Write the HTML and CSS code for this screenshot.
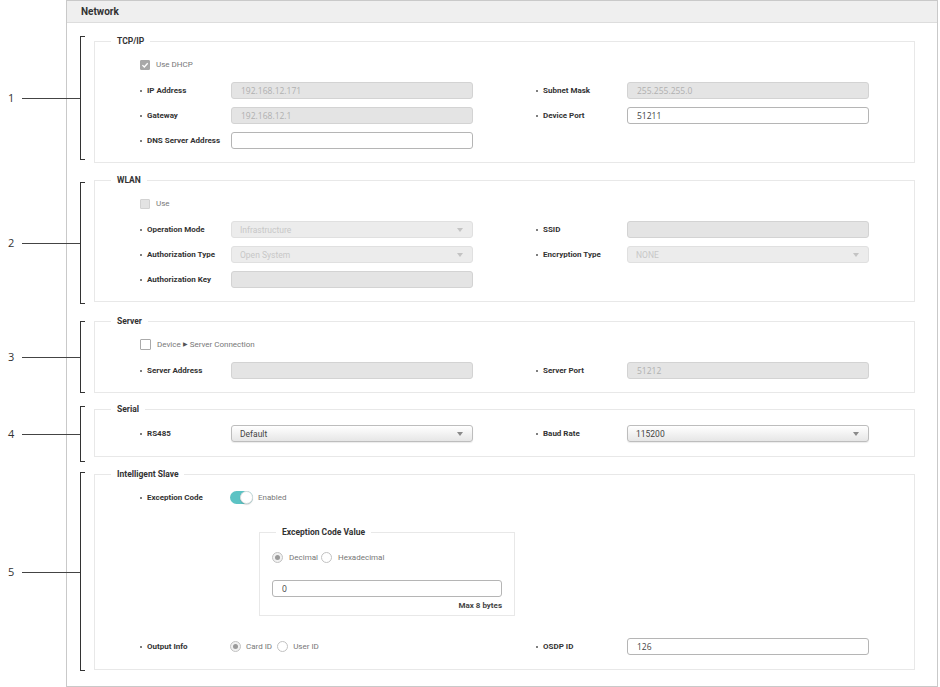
FILE: index.html
```html
<!DOCTYPE html>
<html lang="en">
<head>
<meta charset="utf-8">
<title>Network</title>
<link rel="stylesheet" href="styles.css">
</head>
<body>
<div class="page">
  <div class="callout callout-1"><span class="callout-num">1</span><span class="callout-line"></span><span class="callout-bracket"></span></div>
  <div class="callout callout-2"><span class="callout-num">2</span><span class="callout-line"></span><span class="callout-bracket"></span></div>
  <div class="callout callout-3"><span class="callout-num">3</span><span class="callout-line"></span><span class="callout-bracket"></span></div>
  <div class="callout callout-4"><span class="callout-num">4</span><span class="callout-line"></span><span class="callout-bracket"></span></div>
  <div class="callout callout-5"><span class="callout-num">5</span><span class="callout-line"></span><span class="callout-bracket"></span></div>

  <div class="panel">
    <div class="panel-head">Network</div>
    <div class="panel-body">

      <section class="group">
        <h3 class="group-title">TCP/IP</h3>
        <div class="group-body">
          <label class="check"><span class="box checked"><svg width="10" height="10" viewBox="0 0 10 10"><path d="M2.4 5.1 L4.3 7 L7.7 3.2" fill="none" stroke="#fff" stroke-width="1.3"/></svg></span><span>Use DHCP</span></label>
          <div class="form-grid">
            <span class="label">IP Address</span>
            <input class="field" type="text" value="192.168.12.171" disabled>
            <span class="label right">Subnet Mask</span>
            <input class="field" type="text" value="255.255.255.0" disabled>
            <span class="label">Gateway</span>
            <input class="field" type="text" value="192.168.12.1" disabled>
            <span class="label right">Device Port</span>
            <input class="field" type="text" value="51211">
            <span class="label">DNS Server Address</span>
            <input class="field" type="text" value="">
          </div>
        </div>
      </section>

      <section class="group">
        <h3 class="group-title">WLAN</h3>
        <div class="group-body">
          <label class="check"><span class="box disabled"></span><span>Use</span></label>
          <div class="form-grid">
            <span class="label">Operation Mode</span>
            <div class="select is-disabled"><select disabled><option>Infrastructure</option></select></div>
            <span class="label right">SSID</span>
            <input class="field" type="text" value="" disabled>
            <span class="label">Authorization Type</span>
            <div class="select is-disabled"><select disabled><option>Open System</option></select></div>
            <span class="label right">Encryption Type</span>
            <div class="select is-disabled"><select disabled><option>NONE</option></select></div>
            <span class="label">Authorization Key</span>
            <input class="field" type="text" value="" disabled>
          </div>
        </div>
      </section>

      <section class="group group-server">
        <h3 class="group-title">Server</h3>
        <div class="group-body">
          <label class="check"><span class="box plain"></span><span>Device <span class="tri">▶</span> Server Connection</span></label>
          <div class="form-grid">
            <span class="label">Server Address</span>
            <input class="field" type="text" value="" disabled>
            <span class="label right">Server Port</span>
            <input class="field" type="text" value="51212" disabled>
          </div>
        </div>
      </section>

      <section class="group group-serial">
        <h3 class="group-title">Serial</h3>
        <div class="group-body serial-body">
          <div class="form-grid">
            <span class="label">RS485</span>
            <div class="select"><select><option>Default</option></select></div>
            <span class="label right">Baud Rate</span>
            <div class="select"><select><option>115200</option></select></div>
          </div>
        </div>
      </section>

      <section class="group">
        <h3 class="group-title">Intelligent Slave</h3>
        <div class="group-body slave-body">
          <div class="form-grid">
            <span class="label">Exception Code</span>
            <div class="toggle-wrap"><span class="toggle"></span><span>Enabled</span></div>
          </div>

          <div class="subgroup">
            <h4 class="group-title">Exception Code Value</h4>
            <div class="subgroup-body">
              <div class="radios">
                <span class="radio-opt"><span class="radio on"></span>Decimal</span>
                <span class="radio-opt"><span class="radio"></span>Hexadecimal</span>
              </div>
              <input class="field sub-field" type="text" value="0">
              <div class="note">Max 8 bytes</div>
            </div>
          </div>

          <div class="form-grid output-grid">
            <span class="label">Output Info</span>
            <div class="radios wide">
              <span class="radio-opt"><span class="radio on"></span>Card ID</span>
              <span class="radio-opt"><span class="radio"></span>User ID</span>
            </div>
            <span class="label right">OSDP ID</span>
            <input class="field" type="text" value="126">
          </div>
        </div>
      </section>

    </div>
  </div>
</div>
</body>
</html>
```

FILE: styles.css
```css
body {
  margin: 0;
  background: #fff;
  color: #333;
  font-family: Roboto, "Liberation Sans", sans-serif;
}

.page {
  position: relative;
  width: 940px;
  height: 687px;
  overflow: hidden;
}

/* ---------- callouts (annotation overlay) ---------- */
.callout {
  position: absolute;
  left: 0;
  width: 86px;
}
.callout-1 { top: 36px; height: 124px; }
.callout-2 { top: 182px; height: 122px; }
.callout-3 { top: 321px; height: 72px; }
.callout-4 { top: 406px; height: 56px; }
.callout-5 { top: 472px; height: 199px; }

.callout-num {
  position: absolute;
  left: 8px;
  top: 50%;
  transform: translateY(-50%);
  font-family: "Open Sans", "Liberation Sans", sans-serif;
  font-size: 11px;
  line-height: 12px;
  color: #333;
}
.callout-line {
  position: absolute;
  left: 22px;
  width: 58px;
  top: 50%;
  height: 1px;
  background: #444;
}
.callout-bracket {
  position: absolute;
  left: 80px;
  top: 0;
  bottom: 0;
  width: 4px;
  border: 1px solid #333;
  border-right: none;
}

/* ---------- panel ---------- */
.panel {
  margin-left: 66px;
  width: 872px;
  box-sizing: border-box;
  border: 1px solid #c9c9c9;
}
.panel-head {
  height: 21px;
  line-height: 22px;
  padding-left: 14px;
  background: #efefef;
  border-bottom: 1px solid #dddddd;
  font-size: 10px;
  font-weight: 700;
  color: #333;
}
.panel-body {
  padding: 18px 22px 16px 27px;
}

/* ---------- groups ---------- */
.group {
  border: 1px solid #e8e8e8;
  margin-top: 17px;
}
.group:first-child { margin-top: 0; }
.group-server { margin-top: 19px; }
.group-serial { margin-top: 16px; }

.group-title {
  width: fit-content;
  margin: -7px 0 0 16px;
  padding: 0 6px;
  background: #fff;
  font-size: 8.5px;
  line-height: 12px;
  font-weight: 700;
  color: #333;
}
.group-body {
  padding: 9px 44px 13px 45px;
}
.serial-body { padding-top: 10px; padding-bottom: 14px; }
.slave-body { padding-bottom: 14px; }

.check {
  display: flex;
  align-items: center;
  gap: 6px;
  height: 17px;
  margin-bottom: 9px;
  font-size: 8px;
  color: #777;
}
.tri { font-size: 6px; color: #555; vertical-align: 1px; }

.box {
  width: 10px;
  height: 10px;
  box-sizing: border-box;
  border: 1px solid #c8c8c8;
  border-radius: 1px;
  background: #fff;
}
.box svg { display: block; margin: -1px; }
.box.checked { background: #a8a8a8; border-color: #a8a8a8; }
.box.disabled { background: #e3e3e3; border-color: #d2d2d2; }
.box.plain { width: 11px; height: 11px; border-color: #aaaaaa; }

/* ---------- form grid ---------- */
.form-grid {
  display: grid;
  grid-template-columns: 91px 242px 63px 91px 242px;
  grid-auto-rows: 17px;
  row-gap: 8px;
  align-items: center;
}
.label {
  display: flex;
  align-items: center;
  white-space: nowrap;
  font-size: 8px;
  font-weight: 700;
  color: #333;
}
.label::before {
  content: "";
  width: 2px;
  height: 2px;
  border-radius: 50%;
  background: #555;
  margin-right: 5px;
}
.label.right { grid-column-start: 4; }

.field {
  display: block;
  width: 100%;
  height: 17px;
  box-sizing: border-box;
  margin: 0;
  padding: 0 9px;
  border: 1px solid #b5b5b5;
  border-radius: 3px;
  background: #fff;
  font-family: "Open Sans", "Liberation Sans", sans-serif;
  font-size: 8.5px;
  color: #444;
  outline: none;
}
.field:disabled {
  background: #e4e4e4;
  border-color: #d3d3d3;
  color: #b0b0b0;
  -webkit-text-fill-color: #b0b0b0;
}

.select { position: relative; height: 17px; }
.select select {
  -webkit-appearance: none;
  appearance: none;
  display: block;
  width: 100%;
  height: 17px;
  box-sizing: border-box;
  margin: 0;
  padding: 0 8px;
  border: 1px solid #bdbdbd;
  border-radius: 3px;
  background: linear-gradient(#ffffff, #e6e6e6);
  box-shadow: 0 1px 1px rgba(0,0,0,0.08);
  font-family: Roboto, "Liberation Sans", sans-serif;
  font-size: 8.5px;
  color: #444;
  outline: none;
}
.select select:disabled {
  background: #e4e4e4;
  border-color: #d3d3d3;
  box-shadow: none;
  color: #b0b0b0;
}
.select::after {
  content: "";
  position: absolute;
  right: 10px;
  top: 7px;
  border-left: 3px solid transparent;
  border-right: 3px solid transparent;
  border-top: 4px solid #8a8a8a;
}
.select.is-disabled::after { border-top-color: #c3c3c3; }

/* ---------- toggle ---------- */
.toggle-wrap {
  display: flex;
  align-items: center;
  gap: 5px;
  margin-left: -1px;
  font-size: 8px;
  color: #777;
}
.toggle {
  position: relative;
  width: 23px;
  height: 13px;
  border-radius: 7px;
  background: #5cc3c4;
}
.toggle::after {
  content: "";
  position: absolute;
  right: 0;
  top: 0;
  width: 13px;
  height: 13px;
  box-sizing: border-box;
  border-radius: 50%;
  background: #fff;
  border: 1px solid #e0e0e0;
  box-shadow: 0 1px 1px rgba(0,0,0,0.15);
}

/* ---------- sub group ---------- */
.subgroup {
  width: 256px;
  box-sizing: border-box;
  margin: 26px 0 0 119px;
  border: 1px solid #e8e8e8;
}
.subgroup-body {
  padding: 11px 12px 3px 12px;
}
.radios {
  display: flex;
  align-items: center;
  height: 17px;
  font-size: 8px;
  color: #777;
}
.radio-opt {
  display: flex;
  align-items: center;
  gap: 6px;
  margin-right: 3px;
}
.radios.wide { margin-left: -1px; }
.radios.wide .radio-opt { gap: 5px; margin-right: 5px; }
.radio {
  display: flex;
  align-items: center;
  justify-content: center;
  width: 11px;
  height: 11px;
  box-sizing: border-box;
  border: 1px solid #c2c2c2;
  border-radius: 50%;
  background: #fff;
}
.radio.on { background: #f1f1f1; }
.radio.on::after {
  content: "";
  width: 5px;
  height: 5px;
  border-radius: 50%;
  background: #9a9a9a;
}
.sub-field { margin-top: 14px; }
.note {
  margin-top: 3px;
  text-align: right;
  font-size: 8px;
  line-height: 12px;
  font-weight: 700;
  color: #444;
}
.output-grid { margin-top: 22px; }
```
